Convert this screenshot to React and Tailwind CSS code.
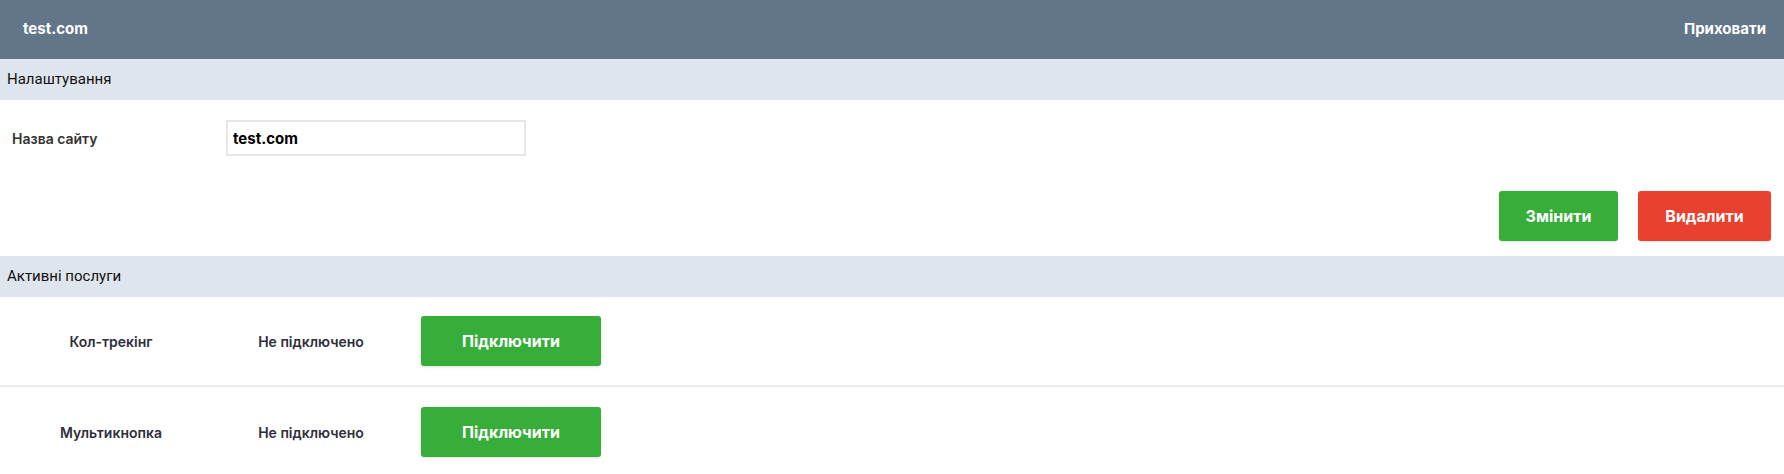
import React from "react";

const services = [
  { name: "Кол-трекінг", status: "Не підключено" },
  { name: "Мультикнопка", status: "Не підключено" },
];

function SectionBar({ children }) {
  return (
    <div className="h-[41px] bg-[#dfe5ec] flex items-center px-[7px] text-[15px] text-[#111]" style={{ fontFamily: '"Liberation Sans Narrow", Roboto, sans-serif' }}>
      {children}
    </div>
  );
}

export default function App() {
  return (
    <div className="w-full min-h-screen bg-white" style={{ fontFamily: 'Inter, Roboto, sans-serif' }}>
      <div className="h-[59px] bg-[#637589] flex items-center justify-between pl-[23px] pr-[18px] text-white font-bold text-[15px]">
        <span>test.com</span>
        <span>Приховати</span>
      </div>

      <SectionBar>Налаштування</SectionBar>

      <div className="pt-[20px] pb-[15px]">
        <div className="flex items-center h-[36px]">
          <div className="w-[226px] pl-[12px] text-[14px] font-semibold text-[#333]">Назва сайту</div>
          <input
            defaultValue="test.com"
            className="w-[300px] h-[36px] border-2 border-[#e6e6e6] px-[5px] text-[15px] font-bold text-black outline-none"
          />
        </div>
        <div className="mt-[35px] flex justify-end gap-[20px] pr-[13px]">
          <button className="w-[119px] h-[50px] rounded-[3px] bg-[#37ae3a] text-white font-bold text-[16px] shadow-sm">Змінити</button>
          <button className="w-[133px] h-[50px] rounded-[3px] bg-[#ea402f] text-white font-bold text-[16px] shadow-sm">Видалити</button>
        </div>
      </div>

      <SectionBar>Активні послуги</SectionBar>

      <div>
        {services.map((s, i) => (
          <div key={i} className={"h-[90px] flex items-center" + (i < services.length - 1 ? " border-b-2 border-[#ebebeb]" : "")}>
            <div className="w-[222px] text-center text-[14px] font-semibold text-[#2f2f3a]">{s.name}</div>
            <div className="w-[178px] text-center text-[14px] font-semibold text-[#2f2f3a]">{s.status}</div>
            <button className="ml-[21px] w-[180px] h-[50px] rounded-[3px] bg-[#37ae3a] text-white font-bold text-[16px] shadow-sm">Підключити</button>
          </div>
        ))}
      </div>
    </div>
  );
}
